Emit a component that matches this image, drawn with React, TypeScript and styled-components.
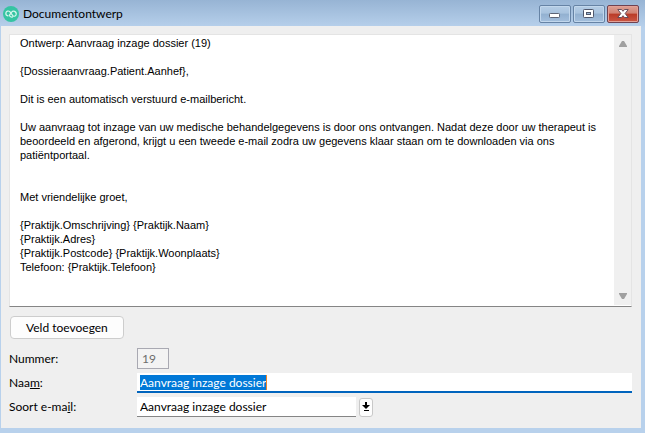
import React, { useState } from "react";
import styled, { createGlobalStyle } from "styled-components";

const GlobalStyle = createGlobalStyle`
  *, *::before, *::after { box-sizing: border-box; }
  html, body, #root { height: 100%; }
  body {
    margin: 0;
    overflow: hidden;
    font-family: Lato, "Open Sans", sans-serif;
    font-size: 12px;
    color: #000;
  }
  input, textarea, select, button { font: inherit; color: inherit; margin: 0; }
`;

const Window = styled.div`
  display: flex;
  flex-direction: column;
  height: 100%;
  padding: 0 4px 5px 1px;
  background: linear-gradient(#97b4d4 0, #b8d1ec 28px);
`;

const TitleBar = styled.header`
  display: flex;
  align-items: center;
  height: 26px;
  flex: none;
  padding: 2px 2px 0;
`;

const Title = styled.h1`
  flex: 1;
  margin: 0 0 0 4px;
  font-size: 12px;
  line-height: 16px;
  font-weight: 400;
`;

const WindowButtons = styled.div`
  display: flex;
  gap: 2px;
`;

const WindowButton = styled.button<{ $close?: boolean }>`
  display: grid;
  place-items: center;
  width: 32px;
  height: 18px;
  padding: 0;
  border: 1px solid ${(p) => (p.$close ? "#6f4250" : "#6683a5")};
  border-radius: 2px;
  background: ${(p) =>
    p.$close
      ? "linear-gradient(#dd9f93 0, #d08172 45%, #ba3b27 50%, #cb5744 100%)"
      : "linear-gradient(#b5cde6 0, #a8c3de 45%, #92b0d0 50%, #a3bfdd 100%)"};
  box-shadow: inset 0 0 0 1px ${(p) => (p.$close ? "#e3a096" : "#c2d7ec")};
`;

const Content = styled.main`
  display: flex;
  flex: 1;
  flex-direction: column;
  min-height: 0;
  padding: 8px 9px 10px 8px;
  background: #efefef;
`;

const Editor = styled.div`
  display: flex;
  flex: 1;
  min-height: 0;
  border: 1px solid #e4e4e4;
  border-bottom-color: #858585;
  background: #fff;
`;

const EditorText = styled.textarea`
  flex: 1;
  min-width: 0;
  padding: 1px 8px 0 10px;
  border: 0;
  outline: 0;
  resize: none;
  overflow: hidden;
  background: transparent;
  font-family: "Liberation Sans", Arial, sans-serif;
  font-size: 11px;
  line-height: 14px;
`;

const ScrollTrack = styled.div`
  display: flex;
  flex-direction: column;
  justify-content: space-between;
  width: 17px;
  margin-bottom: 1px;
  background: #f0f0f0;
`;

const ScrollButton = styled.button`
  display: grid;
  place-items: center;
  height: 18px;
  padding: 0;
  border: 0;
  background: transparent;
`;

const AddButton = styled.button`
  align-self: flex-start;
  height: 23px;
  margin: 9px 0 8px 1px;
  padding: 0 15px;
  border: 1px solid #cdcdcd;
  border-radius: 4px;
  background: #fdfdfd;
  line-height: 20px;
`;

const Form = styled.form`
  display: grid;
  grid-template-columns: 128px 1fr;
  grid-template-rows: 23px 20px 22px;
  row-gap: 3px;
  align-items: center;
`;

const Label = styled.label`
  line-height: 20px;
`;

const NumberInput = styled.input`
  width: 32px;
  height: 21px;
  padding: 0 4px;
  border: 1px solid #a9a9b2;
  background: #f3f3f3;
  color: #6d6d6d;
`;

const NameField = styled.div`
  display: flex;
  align-items: flex-start;
  height: 20px;
  padding: 2px 3px 0;
  border-bottom: 2px solid #0064bd;
  background: #fff;
`;

const NameInput = styled.input`
  field-sizing: content;
  height: 15px;
  padding: 0;
  border: 0;
  border-right: 1px solid #f08428;
  outline: 0;
  background: #0078d7;
  color: #fff;
  line-height: 15px;
`;

const SelectGroup = styled.div`
  display: flex;
  align-items: center;
  gap: 3px;
`;

const Select = styled.select`
  appearance: none;
  width: 219px;
  height: 20px;
  padding: 0 3px;
  border: 0;
  border-bottom: 1px solid #858585;
  border-radius: 0;
  background: #fff;
`;

const DropButton = styled.button`
  display: grid;
  place-items: center;
  width: 14px;
  height: 19px;
  padding: 0;
  border: 1px solid #c8c8c8;
  border-radius: 3px;
  background: #fdfdfd;
`;

const message = `Ontwerp: Aanvraag inzage dossier (19)

{Dossieraanvraag.Patient.Aanhef},

Dit is een automatisch verstuurd e-mailbericht.

Uw aanvraag tot inzage van uw medische behandelgegevens is door ons ontvangen. Nadat deze door uw therapeut is beoordeeld en afgerond, krijgt u een tweede e-mail zodra uw gegevens klaar staan om te downloaden via ons patiëntportaal.


Met vriendelijke groet,

{Praktijk.Omschrijving} {Praktijk.Naam}
{Praktijk.Adres}
{Praktijk.Postcode} {Praktijk.Woonplaats}
Telefoon: {Praktijk.Telefoon}`;

const Logo = () => (
  <svg width="16" height="16" viewBox="0 0 16 16" aria-hidden="true">
    <circle cx="8" cy="8" r="8" fill="#35c4a2" />
    <path
      d="M5 9.8C3.4 9.4 2.6 8.2 2.9 6.8C3.3 5.1 5.4 4.4 6.8 5.7L9.8 9.6C10.8 10.7 12.4 10.4 13 9C13.5 7.6 12.9 6 11.6 5.4C10.3 4.8 9.2 5.4 8.5 6.3L6.4 9.2C6.8 10.6 8.2 11.4 9.5 10.9"
      fill="none"
      stroke="#d5f6ed"
      strokeWidth="1.2"
      strokeLinecap="round"
      strokeLinejoin="round"
    />
  </svg>
);

const MinimizeIcon = () => (
  <svg width="12" height="12" viewBox="0 0 12 12" aria-hidden="true">
    <rect x="0.5" y="5.5" width="10" height="4" rx="0.8" fill="#fff" stroke="#5c6475" />
  </svg>
);

const MaximizeIcon = () => (
  <svg width="12" height="12" viewBox="0 0 12 12" aria-hidden="true">
    <rect x="0.5" y="1.5" width="10" height="8" rx="0.8" fill="#fff" stroke="#50586c" />
    <rect x="3.5" y="4.5" width="4" height="2" fill="#9dbad9" stroke="#50586c" />
  </svg>
);

const CloseIcon = () => (
  <svg width="12" height="12" viewBox="0 0 12 12" aria-hidden="true">
    <path
      d="M0.8 1.5H4.5L6 3.3L7.5 1.5H11.2L8.1 5.5L11.2 9.5H7.5L6 7.7L4.5 9.5H0.8L3.9 5.5Z"
      fill="#fff"
      stroke="#5a4453"
      strokeWidth="0.9"
      strokeLinejoin="round"
    />
  </svg>
);

const ScrollArrow = ({ down = false }: { down?: boolean }) => (
  <svg width="10" height="8" viewBox="0 0 10 8" aria-hidden="true">
    <path d={down ? "M1 1H9V2L6 7H4L1 2Z" : "M4 1H6L9 6V7H1V6Z"} fill="#a0a0a0" />
  </svg>
);

const DropIcon = () => (
  <svg width="8" height="10" viewBox="0 0 8 10" aria-hidden="true">
    <path d="M3 0H5V3H8L4 7L0 3H3ZM2 8H7V9H2Z" fill="#000" />
  </svg>
);

export default function App() {
  const [text, setText] = useState(message);
  const [name, setName] = useState("Aanvraag inzage dossier");

  return (
    <>
      <GlobalStyle />
      <Window>
        <TitleBar>
          <Logo />
          <Title>Documentontwerp</Title>
          <WindowButtons>
            <WindowButton type="button" aria-label="Minimaliseren"><MinimizeIcon /></WindowButton>
            <WindowButton type="button" aria-label="Maximaliseren"><MaximizeIcon /></WindowButton>
            <WindowButton type="button" aria-label="Sluiten" $close><CloseIcon /></WindowButton>
          </WindowButtons>
        </TitleBar>
        <Content>
          <Editor>
            <EditorText
              aria-label="Documenttekst"
              spellCheck={false}
              value={text}
              onChange={(e) => setText(e.target.value)}
            />
            <ScrollTrack>
              <ScrollButton type="button" aria-label="Omhoog"><ScrollArrow /></ScrollButton>
              <ScrollButton type="button" aria-label="Omlaag"><ScrollArrow down /></ScrollButton>
            </ScrollTrack>
          </Editor>
          <AddButton type="button">Veld toevoegen</AddButton>
          <Form onSubmit={(e) => e.preventDefault()}>
            <Label htmlFor="number">Nummer:</Label>
            <NumberInput id="number" value="19" readOnly />
            <Label htmlFor="name">Naa<u>m</u>:</Label>
            <NameField>
              <NameInput id="name" value={name} onChange={(e) => setName(e.target.value)} />
            </NameField>
            <Label htmlFor="kind">Soort e-ma<u>i</u>l:</Label>
            <SelectGroup>
              <Select id="kind">
                <option>Aanvraag inzage dossier</option>
              </Select>
              <DropButton type="button" aria-label="Lijst openen"><DropIcon /></DropButton>
            </SelectGroup>
          </Form>
        </Content>
      </Window>
    </>
  );
}
